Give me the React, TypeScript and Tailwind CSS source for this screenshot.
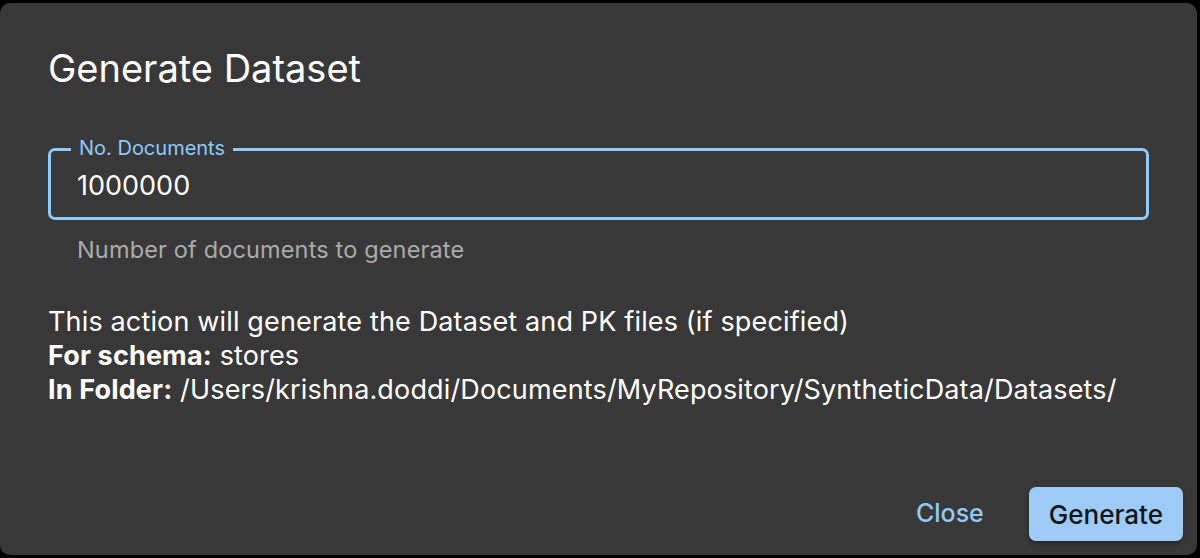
import React from "react";

export default function App() {
  return (
    <div
      className="w-[1200px] h-[558px] bg-black pt-[3px] pr-[3px] pb-[3px] overflow-hidden"
      style={{ fontFamily: "Inter, 'Noto Sans', sans-serif" }}
    >
      <div className="w-[1197px] h-[552px] rounded-[10px] bg-[#383838] flex flex-col">
        <div className="px-[48px]">
          <h2 className="pt-[41px] text-[38px] leading-[48px] text-white font-normal">
            Generate Dataset
          </h2>
          <div className="relative mt-[56px] h-[72px] rounded-[7px] border-[3px] border-[#90caf9] flex items-center px-[26px]">
            <span className="absolute left-[20px] -top-[16px] bg-[#383838] px-[8px] text-[20px] leading-[26px] text-[#90caf9]">
              No. Documents
            </span>
            <span className="text-[27px] leading-[32px] text-white mt-[4px]">1000000</span>
          </div>
          <p className="mt-[16px] pl-[29px] text-[23.5px] leading-[28px] text-[#ababab] tracking-[0.15px]">
            Number of documents to generate
          </p>
          <div className="mt-[41px] text-[27px] leading-[34px] text-white tracking-[0.15px]">
            <p>This action will generate the Dataset and PK files (if specified)</p>
            <p>
              <span className="font-bold">For schema:</span> stores
            </p>
            <p>
              <span className="font-bold">In Folder:</span> /Users/krishna.doddi/Documents/MyRepository/SyntheticData/Datasets/
            </p>
          </div>
        </div>
        <div className="mt-auto flex justify-end items-center gap-[25px] pr-[14px] pb-[14px]">
          <button className="h-[54px] px-[20px] rounded-[7px] text-[25px] font-medium text-[#90caf9]">
            Close
          </button>
          <button className="h-[54px] px-[20px] rounded-[7px] text-[26px] font-medium text-[#141414] bg-[#9ecbf5] shadow-[0_3px_4px_rgba(0,0,0,0.3)]">
            Generate
          </button>
        </div>
      </div>
    </div>
  );
}
